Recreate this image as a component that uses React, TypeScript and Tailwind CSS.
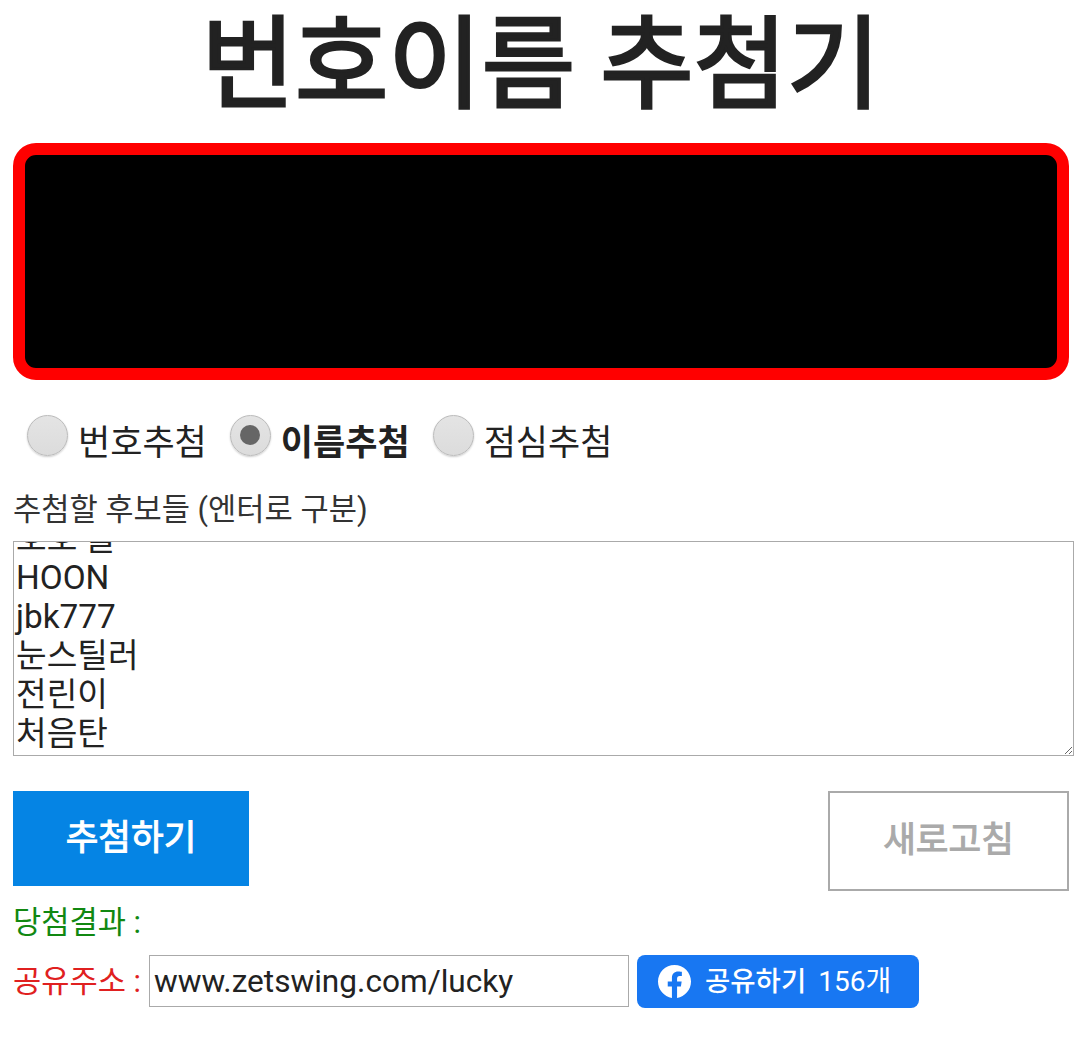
import { useEffect, useRef } from 'react'

const font = "font-['Roboto','Noto_Sans_CJK_KR',sans-serif]"

const names = ['호호 블', 'HOON', 'jbk777', '눈스틸러', '전린이', '처음탄']

function Radio({ label, checked }: { label: string; checked?: boolean }) {
  return (
    <label className="flex items-center">
      <span className="flex h-[41px] w-[41px] -translate-y-[9px] items-center justify-center rounded-full border border-[#bbb] bg-gradient-to-b from-[#e4e4e4] to-[#dcdcdc] shadow-[0_1px_2px_rgba(0,0,0,0.2)]">
        {checked && <span className="h-[20px] w-[20px] rounded-full bg-[#666]" />}
      </span>
      <span className={`ml-[10px] text-[35px] leading-[44px] text-[#222] ${checked ? 'font-bold' : ''}`}>{label}</span>
    </label>
  )
}

export default function App() {
  const boxRef = useRef<HTMLTextAreaElement>(null)

  useEffect(() => {
    if (boxRef.current) boxRef.current.scrollTop = boxRef.current.scrollHeight
  }, [])

  return (
    <div className={`h-[1039px] overflow-hidden bg-white pl-[13px] pr-[6px] ${font}`}>
      <h1 className="pr-[5px] pt-[8px] text-center text-[101.5px] font-normal leading-[116px] text-[#222] [-webkit-text-stroke:3px_#222]">번호이름 추첨기</h1>

      <div className="mr-[5px] mt-[19px] h-[237px] rounded-[23px] border-[12px] border-[#ff0000] bg-black" />

      <div className="mt-[42px] flex gap-[23px] pl-[14px]">
        <Radio label="번호추첨" />
        <Radio label="이름추첨" checked />
        <Radio label="점심추첨" />
      </div>

      <div className="mt-[22px] text-[30.7px] leading-[44px] text-[#333]">추첨할 후보들 (엔터로 구분)</div>

      <textarea
        ref={boxRef}
        readOnly
        defaultValue={names.join('\n')}
        className="mt-[9px] block h-[215px] w-full resize overflow-hidden border border-[#aaa] px-[2px] pb-[2px] pt-[1px] text-[33.3px] leading-[39px] text-[#222] outline-none"
      />

      <div className="mr-[5px] mt-[35px] flex items-start justify-between">
        <button className="flex h-[95px] w-[236px] items-center justify-center bg-[#0584e4] text-[35.5px] font-normal text-white [-webkit-text-stroke:1px_#fff]">추첨하기</button>
        <button className="flex h-[100px] w-[241px] items-center justify-center border-2 border-[#aaa] bg-white text-[35.5px] font-normal text-[#aaa] [-webkit-text-stroke:1px_#aaa]">새로고침</button>
      </div>

      <div className="mt-[12px] text-[30.7px] leading-[40px] text-[#118811]">당첨결과 :</div>

      <div className="mt-[12px] flex items-center">
        <span className="text-[30.7px] leading-[40px] text-[#e02020]">공유주소 :</span>
        <input
          readOnly
          value="www.zetswing.com/lucky"
          className="ml-[8px] h-[52px] w-[480px] self-start border border-[#aaa] px-[4px] text-[31.6px] text-[#222] outline-none"
        />
        <button className="ml-[8px] flex h-[53px] w-[282px] items-center rounded-[8px] bg-[#1877f2] pl-[21px] text-white">
          <svg viewBox="0 0 24 24" className="h-[33px] w-[33px] blur-[0.5px]" fill="currentColor">
            <path d="M24 12.07C24 5.4 18.63 0 12 0S0 5.4 0 12.07c0 6.03 4.39 11.02 10.13 11.93v-8.44H7.08v-3.49h3.05V9.41c0-3.02 1.79-4.69 4.53-4.69 1.31 0 2.69.24 2.69.24v2.97h-1.52c-1.49 0-1.96.93-1.96 1.89v2.25h3.33l-.53 3.49h-2.8V24C19.61 23.09 24 18.1 24 12.07z" />
          </svg>
          <span className="ml-[14px] text-[27.5px] font-medium">공유하기</span>
          <span className="ml-[12px] text-[28px]">156개</span>
        </button>
      </div>
    </div>
  )
}
